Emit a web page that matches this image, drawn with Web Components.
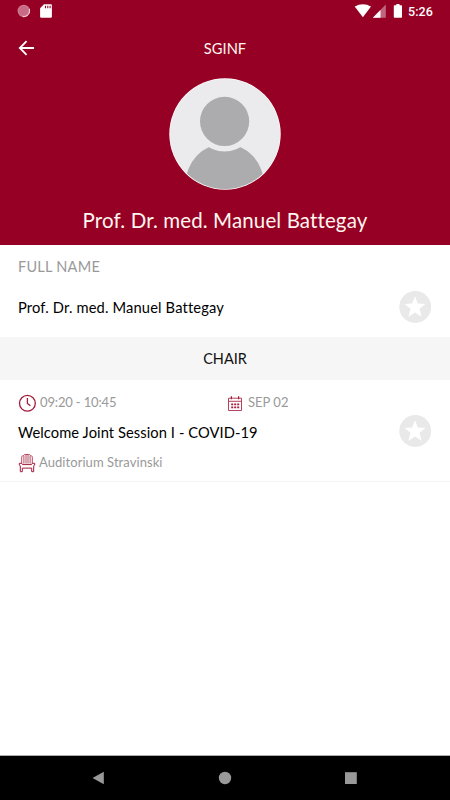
<!DOCTYPE html>
<html lang="en">
<head>
<meta charset="utf-8">
<title>SGINF</title>
<style>
  html, body { margin: 0; height: 100%; }
  body { background: #fff; font-family: Lato, "Open Sans", sans-serif; }
</style>
</head>
<body>
<speaker-page>
  <page-header slot="header" heading="SGINF">Prof. Dr. med. Manuel Battegay</page-header>
  <profile-field label="FULL NAME">Prof. Dr. med. Manuel Battegay</profile-field>
  <section-title>CHAIR</section-title>
  <session-card time="09:20 - 10:45" date="SEP 02" place="Auditorium Stravinski">Welcome Joint Session I - COVID-19</session-card>
  <nav-bar slot="footer"></nav-bar>
</speaker-page>

<script>
class BaseElement extends HTMLElement {
  constructor() {
    super();
    this.shadowDOM = this.attachShadow({ mode: 'open' });
  }
  connectedCallback() {
    this.render();
  }
}

class SpeakerPage extends BaseElement {
  render() {
    this.shadowDOM.innerHTML = `
    <style>
      :host { display: flex; flex-direction: column; height: 800px; background: #fff; }
      main { flex: 1; }
    </style>
    <slot name="header"></slot>
    <main><slot></slot></main>
    <slot name="footer"></slot>`;
  }
}

class StatusBar extends BaseElement {
  render() {
    this.shadowDOM.innerHTML = `
    <style>
      :host { display: flex; height: 24px; box-sizing: border-box; padding: 0 15px 0 17px; justify-content: space-between; color: #fff; }
      div { display: flex; }
      svg { display: block; }
      span { font: 500 12.5px/23px Roboto, sans-serif; letter-spacing: 0.1px; margin-left: 6px; width: 26px; white-space: nowrap; }
      .icons { margin-right: 1px; }
    </style>
    <div>
      <svg width="36" height="24" viewBox="17 0 36 24">
        <circle cx="23.8" cy="11" r="6.2" fill="#c86b84"/>
        <circle cx="23.5" cy="10.7" r="5.2" fill="none" stroke="#d68b9f" stroke-width="1" stroke-dasharray="1 1"/>
        <path d="M29.3 8.8A6 6 0 0 1 22.8 16.6" fill="none" stroke="#f6e3e8" stroke-width="1"/>
        <path fill="#fff" d="M44 4.3h6.5c.9 0 1.4.5 1.4 1.4v10.7c0 .9-.5 1.4-1.4 1.4h-9c-.9 0-1.4-.5-1.4-1.4V8.2z"/>
        <path d="M45.5 5.8v2.5M47.8 5.8v2.5M50.1 5.8v2.5" stroke="#960024" stroke-width="1.1"/>
      </svg>
    </div>
    <div class="icons">
      <svg width="50" height="24" viewBox="352 0 50 24">
        <path fill="#fff" d="M354.7 6.6C359.5 3.3 366.3 3.3 371 6.6L362.9 17.2z"/>
        <path fill="#c0667f" d="M385.8 4.6v13.2h-13z"/>
        <path fill="#fff" d="M380.5 10v7.8h-7.7z"/>
        <path fill="#fff" d="M396.3 4h3.2v1.3h1.5c.6 0 1 .4 1 1v10.5c0 .6-.4 1-1 1h-6.2c-.6 0-1-.4-1-1V6.3c0-.6.4-1 1-1h1.5z"/>
      </svg>
      <span>5:26</span>
    </div>`;
  }
}

class PageHeader extends BaseElement {
  render() {
    this.shadowDOM.innerHTML = `
    <style>
      :host { display: block; height: 245px; background: #960024; color: #fff; }
      .bar { display: grid; grid-template-columns: 52px 1fr 52px; height: 48px; align-items: center; text-align: center; }
      .bar span { font-size: 14.7px; line-height: 48px; color: #fff6ef; }
      svg { display: block; }
      .avatar { margin: 6px auto 0; }
      .name { margin-top: 15px; font-size: 20.5px; line-height: 30px; text-align: center; color: #fff6ef; white-space: nowrap; letter-spacing: 0.12px; }
    </style>
    <status-bar></status-bar>
    <div class="bar">
      <svg width="52" height="48" viewBox="0 24 52 48"><path d="M34 48H20M26.6 41.2L19.8 48l6.8 6.8" fill="none" stroke="#fff" stroke-width="1.8"/></svg>
      <span>${this.getAttribute('heading')}</span>
    </div>
    <svg class="avatar" width="112" height="112" viewBox="0 0 112 112">
      <defs><clipPath id="face"><circle cx="56" cy="56" r="54.9"/></clipPath></defs>
      <circle cx="56" cy="56" r="55.7" fill="#fff"/>
      <circle cx="56" cy="56" r="55.1" fill="#ebebed"/>
      <g clip-path="url(#face)">
        <ellipse cx="55.7" cy="107.5" rx="39.5" ry="42" fill="#acacae"/>
        <circle cx="55.6" cy="43.4" r="30.2" fill="#ebebed"/>
      </g>
      <circle cx="55.6" cy="43.4" r="24.6" fill="#acacae"/>
    </svg>
    <div class="name"><slot></slot></div>`;
  }
}

class StarButton extends BaseElement {
  render() {
    this.shadowDOM.innerHTML = `
    <style>
      :host { display: block; width: 32px; height: 32px; }
      svg { display: block; }
    </style>
    <svg width="32" height="32" viewBox="0 0 32 32">
      <circle cx="16.2" cy="16" r="15.9" fill="#e9e9e9"/>
      <path fill="#fff" d="M16 5.2l2.8 7.3 7.7.4-6 4.9 2.1 8-6.6-4.4-6.6 4.4 2.1-8-6-4.9 7.7-.4z"/>
    </svg>`;
  }
}

class ProfileField extends BaseElement {
  render() {
    this.shadowDOM.innerHTML = `
    <style>
      :host { display: flex; flex-direction: column; box-sizing: border-box; height: 92px; padding: 12px 19px 0 18px; }
      label { font-size: 14.5px; line-height: 20px; color: #999; letter-spacing: 0.25px; }
      .row { display: flex; justify-content: space-between; align-items: center; margin-top: 14px; height: 32px; font-size: 14.7px; color: #000; }
      .value { letter-spacing: 0.15px; white-space: nowrap; }
    </style>
    <label>${this.getAttribute('label')}</label>
    <div class="row"><span class="value"><slot></slot></span><star-button></star-button></div>`;
  }
}

class SectionTitle extends BaseElement {
  render() {
    this.shadowDOM.innerHTML = `
    <style>
      :host { display: block; height: 43px; background: #f6f6f6; color: #111; font-size: 14.5px; line-height: 43px; text-align: center; }
    </style>
    <slot></slot>`;
  }
}

class SessionCard extends BaseElement {
  render() {
    this.shadowDOM.innerHTML = `
    <style>
      :host { display: flex; justify-content: space-between; box-sizing: border-box; height: 102px; padding: 13px 19px 0 18px; border-bottom: 1px solid #f4f4f4; }
      .meta { display: flex; height: 20px; color: #999; font-size: 13px; line-height: 20px; white-space: nowrap; }
      .meta div { display: flex; }
      .meta span { margin-top: -1px; }
      .when { width: 208px; }
      .time { letter-spacing: -0.15px; }
      .date { letter-spacing: 0; }
      .place { letter-spacing: 0.06px; }
      .title { margin: 9px 0 11px; font-size: 14.7px; line-height: 20px; color: #000; letter-spacing: 0.08px; white-space: nowrap; }
      svg { display: block; flex: none; width: 18px; height: 20px; margin-right: 4px; fill: none; stroke: #a31c3b; }
      .place svg { margin-right: 3px; }
      star-button { margin-top: 22px; }
    </style>
    <div>
      <div class="meta">
        <div class="when">
          <svg viewBox="18 393 18 20"><circle cx="27.4" cy="403.3" r="7.9" stroke-width="1.3"/><path d="M27.4 398v5.4l3 2.3" stroke-width="1.3"/></svg>
          <span class="time">${this.getAttribute('time')}</span>
        </div>
        <div>
          <svg viewBox="226 393 18 20">
            <path d="M228.5 398.2h13v12.3h-13zM228.5 401.3h13" stroke="#b6415b" stroke-width="1"/>
            <path d="M231.4 396.3v3M238.6 396.3v3" stroke-width="1.2"/>
            <path d="M231.2 404.4h8M231.2 407.4h8" stroke-width="1.9" stroke-dasharray="2 1"/>
          </svg>
          <span class="date">${this.getAttribute('date')}</span>
        </div>
      </div>
      <div class="title"><slot></slot></div>
      <div class="meta place">
        <svg viewBox="18 453 18 20">
          <path d="M21.7 463.2v-6c0-1 .8-1.6 1.7-1.6.4-.8 1.2-1.1 2-1.1h3.2c.8 0 1.6.3 2 1.1.9 0 1.7.6 1.7 1.6v6M23.9 455.8v7.8M26 454.6v9M28 454.6v9M30.1 455.8v7.8" stroke-width=".8"/>
          <path d="M19.3 463.3h2.5l.7 1.3h9l.7-1.3h2.5v1.8l-1 .6v6h-2v-3.6H22.3v3.6h-2v-6l-1-.6z" stroke-width="1"/>
        </svg>
        <span>${this.getAttribute('place')}</span>
      </div>
    </div>
    <star-button></star-button>`;
  }
}

class NavBar extends BaseElement {
  render() {
    this.shadowDOM.innerHTML = `
    <style>
      :host { display: grid; grid-template-columns: repeat(3, 126px); justify-content: center; justify-items: center; align-items: center; box-sizing: border-box; height: 45px; background: #000; border-top: 1px solid #a9aeab; }
      svg { display: block; fill: #999; }
    </style>
    <svg width="14" height="14" viewBox="0 0 14 14"><path d="M11.8.7v12.6L.5 7z"/></svg>
    <svg width="14" height="14" viewBox="0 0 14 14"><circle cx="7" cy="7" r="6.2"/></svg>
    <svg width="14" height="14" viewBox="0 0 14 14"><path d="M1 1.2h11.8V13H1z"/></svg>`;
  }
}

customElements.define('star-button', StarButton);
customElements.define('status-bar', StatusBar);
customElements.define('page-header', PageHeader);
customElements.define('profile-field', ProfileField);
customElements.define('section-title', SectionTitle);
customElements.define('session-card', SessionCard);
customElements.define('nav-bar', NavBar);
customElements.define('speaker-page', SpeakerPage);
</script>
</body>
</html>
